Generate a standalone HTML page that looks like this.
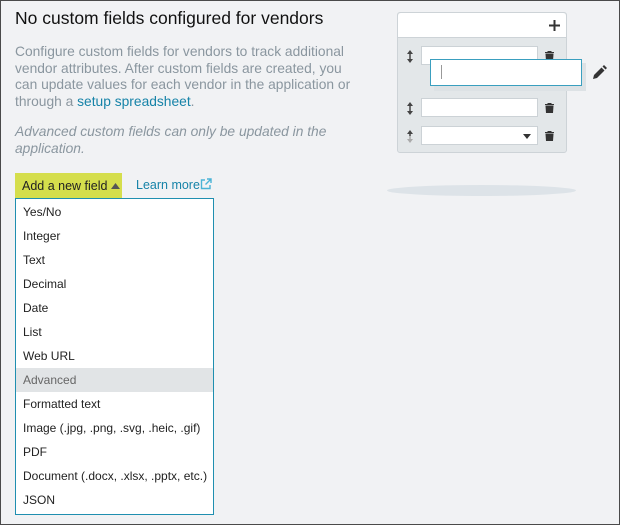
<!DOCTYPE html>
<html><head><style>
*{box-sizing:border-box;margin:0;padding:0}
body{width:620px;height:525px;background:#f1f2f4;font-family:"Liberation Sans",sans-serif;position:relative;overflow:hidden;border:1px solid #4a4a4a}
.a{position:absolute}
h1{position:absolute;left:14px;top:7px;font-size:17.5px;font-weight:normal;color:#111;white-space:nowrap}
.p{left:14px;top:43px;width:340px;font-size:13.8px;line-height:16.7px;color:#8a969f}
.p a{color:#1683a8}
.i{left:14px;top:123px;width:340px;font-size:13.8px;line-height:16.7px;color:#8a969f;font-style:italic}
.btn{left:14px;top:172px;width:107px;height:25px;background:#d5de4c;font-size:12.5px;color:#222;padding:6px 0 0 7px;white-space:nowrap}
.lm{left:135px;top:177px;font-size:12.5px;color:#1683a8;white-space:nowrap}
.dd{left:14px;top:197px;width:199px;height:317px;background:#fff;border:1.5px solid #1f8fb0}
.dd div{height:24px;line-height:24px;padding-left:7px;font-size:12px;color:#222;white-space:nowrap}
.dd .adv{background:#e1e4e6;color:#666}
.card{left:396px;top:11px;width:170px;height:141px;background:#e3e7e9;border:1px solid #cdd3d7;border-radius:3px}
.hd{left:0;top:0;width:168px;height:25px;background:#fff;border-bottom:1px solid #cdd3d7;border-radius:3px 3px 0 0}
.in{background:#fff;border:1px solid #ccd2d6;height:19px;width:117px;left:23px}
</style></head><body>
<h1>No custom fields configured for vendors</h1>
<div class="a p">Configure custom fields for vendors to track additional vendor attributes. After custom fields are created, you can update values for each vendor in the application or through a <a>setup spreadsheet</a>.</div>
<div class="a i">Advanced custom fields can only be updated in the application.</div>
<div class="a btn">Add a new field <svg width="9" height="6" viewBox="0 0 9 6" style="vertical-align:1px"><path d="M0 6L4.5 0 9 6z" fill="#555"/></svg></div>
<div class="a lm">Learn more<svg width="12" height="12" viewBox="0 0 12 12" style="vertical-align:-1px"><path d="M5 2H1.5v8.5H10V7M7 1h4v4M11 1L5.5 6.5" fill="none" stroke="#4ab3d6" stroke-width="1.4"/></svg></div>
<div class="a dd">
<div style="margin-top:1px">Yes/No</div><div>Integer</div><div>Text</div><div>Decimal</div><div>Date</div><div>List</div><div>Web URL</div><div class="adv">Advanced</div><div>Formatted text</div><div>Image (.jpg, .png, .svg, .heic, .gif)</div><div>PDF</div><div>Document (.docx, .xlsx, .pptx, etc.)</div><div>JSON</div>
</div>
<div class="a" style="left:386px;top:184px;width:189px;height:11px;border-radius:50%;background:#dde3e8"></div>
<div class="a card">
<div class="a hd"><svg class="a" style="right:6px;top:7px" width="11" height="11" viewBox="0 0 11 11"><path d="M5.5 0v11M0 5.5h11" stroke="#333" stroke-width="2"/></svg></div>
<div class="a in" style="top:33px"></div>
<div class="a in" style="top:85px"></div>
<div class="a in" style="top:113px"><svg class="a" style="right:6px;top:7px" width="8" height="5"><path d="M0 0h8L4 5z" fill="#333"/></svg></div>
<svg class="a" style="left:8px;top:37px" width="8" height="13"><path d="M4 0L7 4H1zM4 13L7 9H1z" fill="#444"/><path d="M4 3v7" stroke="#444" stroke-width="1.5"/></svg>
<svg class="a" style="left:8px;top:89px" width="8" height="13"><path d="M4 0L7 4H1zM4 13L7 9H1z" fill="#444"/><path d="M4 3v7" stroke="#444" stroke-width="1.5"/></svg>
<svg class="a" style="left:8px;top:117px" width="8" height="13"><path d="M4 0L7 4H1z" fill="#444"/><path d="M4 13L7 9H1z" fill="#aaa"/><path d="M4 3v3" stroke="#444" stroke-width="1.5"/><path d="M4 6v4" stroke="#aaa" stroke-width="1.5"/></svg>
<svg class="a" style="left:147px;top:38px" width="9" height="10"><path d="M0 1.5h9M3 1.5V0h3v1.5M1 3h7l-.5 7h-6z" fill="#333" stroke="#333" stroke-width="1"/></svg>
<svg class="a" style="left:147px;top:90px" width="9" height="10"><path d="M0 1.5h9M3 1.5V0h3v1.5M1 3h7l-.5 7h-6z" fill="#333" stroke="#333" stroke-width="1"/></svg>
<svg class="a" style="left:147px;top:118px" width="9" height="10"><path d="M0 1.5h9M3 1.5V0h3v1.5M1 3h7l-.5 7h-6z" fill="#333" stroke="#333" stroke-width="1"/></svg>
</div>
<div class="a" style="left:433px;top:62px;width:152px;height:28px;background:#dde2e5"></div>
<div class="a" style="left:429px;top:58px;width:152px;height:27px;background:#fff;border:1.5px solid #3a9fbf"><div class="a" style="left:10px;top:5px;width:1px;height:14px;background:#999"></div></div>
<svg class="a" style="left:591px;top:64px" width="15" height="15" viewBox="0 0 15 15"><path d="M1 14l1-4 7.5-7.5 3 3L5 13z" fill="#333"/><path d="M10.5 1.5l1.5-1.5 3 3-1.5 1.5z" fill="#333"/></svg>
</body></html>
